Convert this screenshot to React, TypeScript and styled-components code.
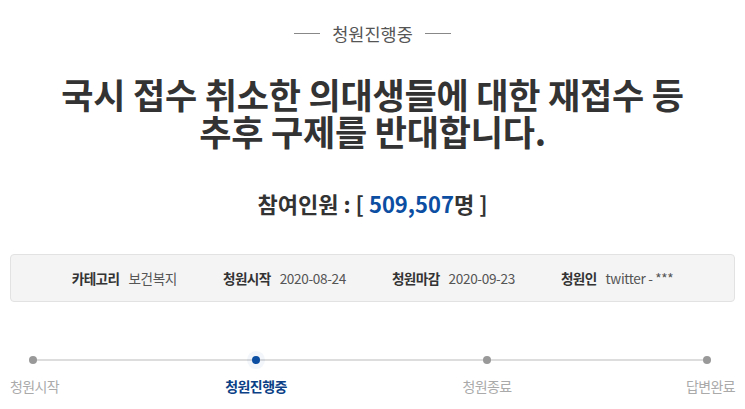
import React from "react";
import styled, { createGlobalStyle } from "styled-components";

const Global = createGlobalStyle`
  html, body { margin: 0; padding: 0; background: #fff; }
  body { font-family: "Noto Sans CJK KR", "Noto Sans", sans-serif; color: #333; }
`;

const Page = styled.div`
  width: 745px;
  box-sizing: border-box;
  padding: 0 10px;
  display: flex;
  flex-direction: column;
  align-items: stretch;
`;

const Status = styled.div`
  display: flex;
  align-items: center;
  justify-content: center;
  gap: 12px;
  margin-top: 20px;
  height: 26px;
  font-size: 17.5px;
  color: #555;
`;

const Rule = styled.span`
  display: block;
  width: 26px;
  height: 1px;
  background: #888;
`;

const Title = styled.h1`
  margin: 29px 0 0;
  font-size: 35px;
  line-height: 37px;
  font-weight: 700;
  color: #333;
  text-align: center;
  letter-spacing: -0.2px;
`;

const Count = styled.div`
  margin-top: 39px;
  text-align: center;
  font-size: 22px;
  line-height: 30px;
  font-weight: 700;
  color: #333;
`;

const Num = styled.span`
  color: #0b4ea2;
`;

const InfoBox = styled.div`
  margin-top: 36px;
  height: 46px;
  border: 1px solid #e2e2e2;
  border-radius: 4px;
  background: #f4f4f4;
  display: flex;
  align-items: center;
  justify-content: center;
  gap: 46px;
  font-size: 13.6px;
  letter-spacing: -0.6px;
`;

const Item = styled.div`
  display: flex;
  align-items: baseline;
  gap: 9px;
`;

const Label = styled.span`
  font-weight: 700;
  color: #333;
`;

const Value = styled.span`
  color: #555;
  font-weight: 400;
  letter-spacing: -0.35px;
`;

type Align = "left" | "center" | "right";

const Progress = styled.div`
  margin-top: 50px;
  position: relative;
  display: grid;
  grid-template-columns: 135px 222px 240px 128px;

  &::before {
    content: "";
    position: absolute;
    left: 23px;
    right: 28px;
    top: 7px;
    height: 2px;
    background: #ddd;
  }
`;

const Step = styled.div<{ $align: Align }>`
  display: flex;
  flex-direction: column;
  align-items: ${(p) =>
    p.$align === "left" ? "flex-start" : p.$align === "right" ? "flex-end" : "center"};
  gap: 12px;
  position: relative;
`;

const Dot = styled.span<{ $active?: boolean; $align: Align }>`
  display: block;
  width: 8px;
  height: 8px;
  border-radius: 50%;
  margin-top: 4px;
  background: ${(p) => (p.$active ? "#0b4ea2" : "#999")};
  box-shadow: ${(p) => (p.$active ? "0 0 0 5px rgba(11,78,162,0.05)" : "none")};
  margin-left: ${(p) => (p.$align === "left" ? "19px" : "0")};
  margin-right: ${(p) => (p.$align === "right" ? "24px" : "0")};
`;

const StepLabel = styled.span<{ $active?: boolean }>`
  font-size: 14px;
  line-height: 20px;
  letter-spacing: -0.6px;
  color: ${(p) => (p.$active ? "#0b3f86" : "#aaa")};
  font-weight: ${(p) => (p.$active ? 700 : 400)};
`;

const steps: { label: string; align: Align; active?: boolean }[] = [
  { label: "청원시작", align: "left" },
  { label: "청원진행중", align: "center", active: true },
  { label: "청원종료", align: "center" },
  { label: "답변완료", align: "right" },
];

const info: [string, string][] = [
  ["카테고리", "보건복지"],
  ["청원시작", "2020-08-24"],
  ["청원마감", "2020-09-23"],
  ["청원인", "twitter - ***"],
];

export default function App() {
  return (
    <>
      <Global />
      <Page>
        <Status>
          <Rule />
          <span>청원진행중</span>
          <Rule />
        </Status>
        <Title>
          국시 접수 취소한 의대생들에 대한 재접수 등
          <br />
          추후 구제를 반대합니다.
        </Title>
        <Count>
          참여인원 : [ <Num>509,507</Num>명 ]
        </Count>
        <InfoBox>
          {info.map(([k, v]) => (
            <Item key={k}>
              <Label>{k}</Label>
              <Value>{v}</Value>
            </Item>
          ))}
        </InfoBox>
        <Progress>
          {steps.map((s) => (
            <Step key={s.label} $align={s.align}>
              <Dot $align={s.align} $active={s.active} />
              <StepLabel $active={s.active}>{s.label}</StepLabel>
            </Step>
          ))}
        </Progress>
      </Page>
    </>
  );
}
